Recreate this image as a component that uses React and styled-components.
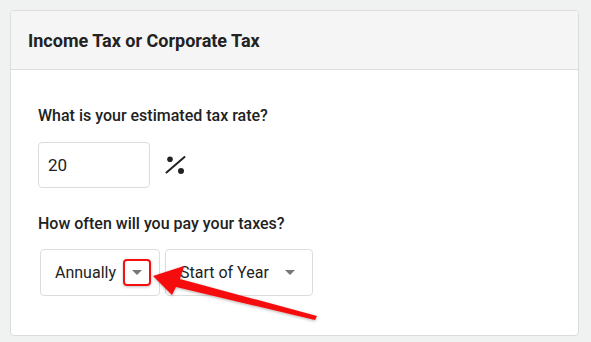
import styled, {createGlobalStyle} from "styled-components";

const GlobalStyle = createGlobalStyle`
  html, body {
    margin: 0;
    padding: 0;
    background: #f0f1f1;
    font-family: Roboto, "Liberation Sans", sans-serif;
    color: #222;
  }
`

function Select({value, width, highlighted}) {
    return (
        <SelectBox $width={width}>
            <SelectValue>{value}</SelectValue>
            <CaretBox $highlighted={highlighted}>
                <Caret/>
            </CaretBox>
        </SelectBox>
    )
}

function PercentIcon() {
    return (
        <PercentSvg width="21" height="19" viewBox="0 0 21 19" aria-label="%">
            <line x1="1.5" y1="17.5" x2="19.5" y2="2" stroke="#222" strokeWidth="2" strokeLinecap="round"/>
            <circle cx="5" cy="4.3" r="2.8" fill="#222"/>
            <circle cx="16" cy="16" r="3" fill="#222"/>
        </PercentSvg>
    )
}

export default function App() {
    return (
        <Page>
            <GlobalStyle/>
            <Card>
                <CardHeader>
                    <CardTitle>Income Tax or Corporate Tax</CardTitle>
                </CardHeader>

                <CardBody>
                    <Label>What is your estimated tax rate?</Label>
                    <RateRow>
                        <RateInput defaultValue="20"/>
                        <PercentIcon/>
                    </RateRow>

                    <Label $spaced>How often will you pay your taxes?</Label>
                    <SelectRow>
                        <Select value="Annually" width={120} highlighted/>
                        <Select value="Start of Year" width={148}/>
                    </SelectRow>
                </CardBody>
            </Card>

            <Annotation width="591" height="342" viewBox="0 0 591 342">
                <defs>
                    <filter id="arrowShadow" x="-10%" y="-30%" width="120%" height="160%">
                        <feDropShadow dx="0" dy="1" stdDeviation="1.5" floodColor="#000" floodOpacity="0.3"/>
                    </filter>
                </defs>
                <polygon
                    points="153,276 184,266 180,279 317,316 315,320 176,287 172,295"
                    fill="#f51010"
                    filter="url(#arrowShadow)"
                />
            </Annotation>
        </Page>
    )
}

const Page = styled.div`
  position: relative;
  width: 591px;
  height: 342px;
  padding: 10px 12px 0 10px;
  box-sizing: border-box;
`
const Card = styled.section`
  background: #fff;
  border: 1px solid #dcdcdc;
  border-radius: 4px;
  overflow: hidden;
  box-sizing: border-box;
  height: 326px;
`
const CardHeader = styled.header`
  display: flex;
  align-items: center;
  height: 59px;
  padding: 0 17px;
  background: #f5f5f5;
  border-bottom: 1px solid #dcdcdc;
  box-sizing: border-box;
`
const CardTitle = styled.h2`
  margin: 0;
  font-size: 18px;
  font-weight: 700;
  color: #222;
`
const CardBody = styled.div`
  padding: 34px 27px 0;
`
const Label = styled.div`
  font-size: 16px;
  font-weight: 500;
  line-height: 24px;
  color: #222;
  margin-top: ${p => p.$spaced ? "24px" : "0"};
`
const RateRow = styled.div`
  display: flex;
  align-items: center;
  gap: 15px;
  margin-top: 14px;
`
const RateInput = styled.input`
  width: 112px;
  height: 46px;
  box-sizing: border-box;
  border: 1px solid #dcdcdc;
  border-radius: 4px;
  padding: 0 9px;
  font-family: inherit;
  font-size: 17px;
  color: #222;
  outline: none;
`
const PercentSvg = styled.svg`
  display: block;
  margin-bottom: 2px;
`
const SelectRow = styled.div`
  display: flex;
  gap: 5px;
  margin: 13px 0 0 2px;
`
const SelectBox = styled.div`
  display: flex;
  align-items: center;
  width: ${p => p.$width}px;
  height: 47px;
  box-sizing: border-box;
  border: 1px solid #dcdcdc;
  border-radius: 4px;
  padding: 0 8px 0 14px;
  background: #fff;
`
const SelectValue = styled.span`
  font-size: 16px;
  color: #222;
`
const CaretBox = styled.span`
  display: flex;
  align-items: center;
  justify-content: center;
  width: 28px;
  height: 27px;
  margin-left: auto;
  box-sizing: border-box;
  border-radius: 4px;
  border: 2px solid ${p => p.$highlighted ? "#f51010" : "transparent"};
  box-shadow: ${p => p.$highlighted ? "0 1px 3px rgba(0,0,0,0.25)" : "none"};
`
const Caret = styled.span`
  width: 0;
  height: 0;
  border-left: 5px solid transparent;
  border-right: 5px solid transparent;
  border-top: 5px solid #777;
`
const Annotation = styled.svg`
  position: absolute;
  top: 0;
  left: 0;
  pointer-events: none;
`
